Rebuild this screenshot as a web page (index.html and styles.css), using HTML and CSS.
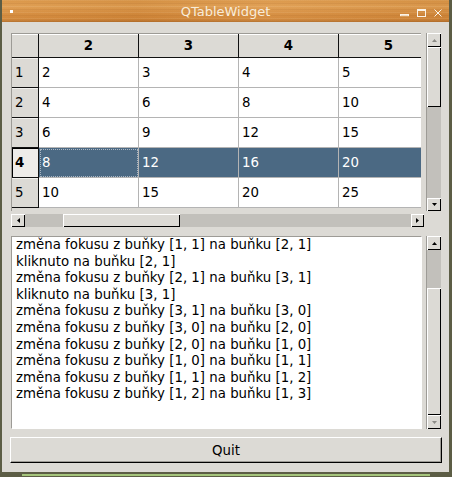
FILE: index.html
```html
<!DOCTYPE html>
<html>
<head>
<meta charset="utf-8">
<link rel="stylesheet" href="styles.css">
</head>
<body>
<div class="window">
  <div class="titlebar">
    <div class="tb-left"><span class="menu-dot"></span></div>
    <div class="title">QTableWidget</div>
    <div class="tb-right">
      <svg class="controls" width="44" height="22" viewBox="0 0 44 22">
        <g fill="none" stroke="#fbf3e6" stroke-width="1">
          <rect x="0.5" y="13.5" width="8" height="1.2"/>
          <rect x="17.5" y="8.5" width="8" height="7"/>
          <line x1="17.5" y1="9.5" x2="25.5" y2="9.5"/>
          <line x1="34.5" y1="8.5" x2="41.5" y2="15.5"/>
          <line x1="41.5" y1="8.5" x2="34.5" y2="15.5"/>
        </g>
      </svg>
    </div>
  </div>

  <div class="client">
    <div class="table-widget">
      <div class="viewport">
        <div class="row header-row">
          <div class="rh corner"></div>
          <div class="ch">2</div><div class="ch">3</div><div class="ch">4</div><div class="ch">5</div>
        </div>
        <div class="row">
          <div class="rh">1</div>
          <div class="cell">2</div><div class="cell">3</div><div class="cell">4</div><div class="cell">5</div>
        </div>
        <div class="row">
          <div class="rh">2</div>
          <div class="cell">4</div><div class="cell">6</div><div class="cell">8</div><div class="cell">10</div>
        </div>
        <div class="row">
          <div class="rh">3</div>
          <div class="cell">6</div><div class="cell">9</div><div class="cell">12</div><div class="cell">15</div>
        </div>
        <div class="row selected">
          <div class="rh rh-active">4</div>
          <div class="cell focus">8</div><div class="cell">12</div><div class="cell">16</div><div class="cell">20</div>
        </div>
        <div class="row">
          <div class="rh">5</div>
          <div class="cell">10</div><div class="cell">15</div><div class="cell">20</div><div class="cell">25</div>
        </div>
      </div>

      <div class="vscroll table-vs">
        <div class="sbtn vbtn"><svg width="5" height="3"><polygon points="0,3 5,3 2.5,0" fill="#8c8b87"/></svg></div>
        <div class="slider tv-slider"></div>
        <div class="trough"></div>
        <div class="sbtn vbtn-down"><svg width="5" height="3"><polygon points="0,0 5,0 2.5,3" fill="#000"/></svg></div>
      </div>

      <div class="hscroll">
        <div class="sbtn hbtn"><svg width="3" height="5"><polygon points="3,0 3,5 0,2.5" fill="#000"/></svg></div>
        <div class="trough h-trough-a"></div>
        <div class="slider h-slider"></div>
        <div class="trough"></div>
        <div class="sbtn hbtn-r"><svg width="3" height="5"><polygon points="0,0 0,5 3,2.5" fill="#000"/></svg></div>
      </div>
    </div>

    <div class="log-widget">
      <div class="log">
        <div>změna fokusu z buňky [1, 1] na buňku [2, 1]</div>
        <div>kliknuto na buňku [2, 1]</div>
        <div>změna fokusu z buňky [2, 1] na buňku [3, 1]</div>
        <div>kliknuto na buňku [3, 1]</div>
        <div>změna fokusu z buňky [3, 1] na buňku [3, 0]</div>
        <div>změna fokusu z buňky [3, 0] na buňku [2, 0]</div>
        <div>změna fokusu z buňky [2, 0] na buňku [1, 0]</div>
        <div>změna fokusu z buňky [1, 0] na buňku [1, 1]</div>
        <div>změna fokusu z buňky [1, 1] na buňku [1, 2]</div>
        <div>změna fokusu z buňky [1, 2] na buňku [1, 3]</div>
      </div>
      <div class="vscroll log-vs">
        <div class="sbtn vbtn"><svg width="5" height="3"><polygon points="0,3 5,3 2.5,0" fill="#000"/></svg></div>
        <div class="trough log-trough"></div>
        <div class="slider log-slider"></div>
        <div class="sbtn vbtn-down log-down"><svg width="5" height="3"><polygon points="0,0 5,0 2.5,3" fill="#8c8b87"/></svg></div>
      </div>
    </div>

    <div class="quit">Quit</div>
  </div>

  <div class="bottom-frame"><div class="green"></div></div>
</div>
</body>
</html>
```
FILE: styles.css
```css
* { box-sizing: border-box; }
html, body { margin: 0; padding: 0; }
body {
  width: 452px;
  height: 477px;
  overflow: hidden;
  background: #5c5d45;
  font-family: "DejaVu Sans", "Liberation Sans", sans-serif;
  font-size: 13.33px;
  color: #000;
}
.window {
  width: 452px;
  height: 477px;
  display: flex;
  flex-direction: column;
  background: #dcdad5;
  border-left: 2px solid #5c5d45;
  border-right: 3px solid #5c5d45;
}

/* title bar */
.titlebar {
  height: 22px;
  flex: none;
  display: grid;
  grid-template-columns: 1fr auto 1fr;
  align-items: center;
  background:
    repeating-linear-gradient(180deg, rgba(255,235,200,0.10) 0 1px, rgba(0,0,0,0) 1px 3px, rgba(120,60,10,0.08) 3px 4px, rgba(0,0,0,0) 4px 6px),
    linear-gradient(90deg, rgba(255,220,170,0.06), rgba(120,60,10,0.05) 30%, rgba(255,220,170,0.08) 60%, rgba(120,60,10,0.06)),
    linear-gradient(180deg, #d99445 0%, #de9c50 30%, #d58c3e 60%, #d08537 85%, #b97430 100%);
}
.tb-left { display: flex; padding-left: 8px; }
.menu-dot { width: 3px; height: 3px; background: #fff; margin-top: -1px; }
.title {
  color: #f8ecd9;
  font-size: 13px;
  line-height: 22px;
  padding-top: 1px;
}
.tb-right { display: flex; justify-content: flex-end; padding-right: 5px; }
.controls { display: block; }

/* client */
.client {
  flex: 1;
  display: flex;
  flex-direction: column;
  padding: 11px 8px 0 9px;
}

.table-widget {
  display: grid;
  grid-template-columns: 413px 15px;
  grid-template-rows: 178px 17px;
  column-gap: 2px;
}
.viewport {
  grid-row: 1;
  grid-column: 1;
  width: 410px;
  overflow: hidden;
  border-top: 1px solid #9d9b96;
  border-left: 1px solid #9d9b96;
  background: #dcdad5;
}
.row { display: flex; height: 30px; background: #fff; }
.header-row { height: 24px; background: #dcdad5; }
.rh {
  flex: none;
  width: 27px;
  padding-left: 3px;
  display: flex;
  align-items: center;
  background: #dcdad5;
  border-right: 1px solid #111;
  border-bottom: 1px solid #111;
  box-shadow: inset 0 1px 0 #f2f1ee;
}
.corner { box-shadow: inset 0 1px 0 #fff; }
.ch {
  flex: none;
  width: 100px;
  font-weight: bold;
  display: flex;
  align-items: center;
  justify-content: center;
  border-right: 1px solid #111;
  border-bottom: 1px solid #111;
  box-shadow: inset 0 1px 0 #fff;
}
.cell {
  flex: none;
  width: 100px;
  padding-left: 3px;
  display: flex;
  align-items: center;
  border-right: 1px solid #b4b4b4;
  border-bottom: 1px solid #b4b4b4;
}
.selected .cell { background: #4b6983; color: #fff; }
.rh-active {
  background: #eeece9;
  font-weight: bold;
  box-shadow: inset 1px 1px 0 #000;
}
.focus { outline: 1px dotted #a9b6c3; outline-offset: -2px; }

/* scrollbars */
.vscroll {
  display: flex;
  flex-direction: column;
  border-left: 1px solid #9d9b96;
  background: #c2c0bb;
}
.table-vs { grid-row: 1; grid-column: 2; }
.sbtn, .slider {
  background: #dcdad5;
  box-shadow: inset 1px 1px 0 #fff, inset -1px -1px 0 #000;
  display: flex;
  align-items: center;
  justify-content: center;
  flex: none;
}
.sbtn svg { display: block; }
.vbtn { height: 14px; }
.vbtn-down { height: 13px; }
.tv-slider { height: 60px; }
.trough { flex: 1; background: #c2c0bb; }

.hscroll {
  grid-row: 2;
  grid-column: 1;
  margin-top: 3px;
  height: 13px;
  display: flex;
  background: #c2c0bb;
}
.hbtn { width: 14px; }
.hbtn-r { width: 13px; }
.h-trough-a { flex: none; width: 38px; }
.h-slider { width: 117px; }

/* log */
.log-widget {
  margin-top: 8px;
  height: 193px;
  display: flex;
}
.log {
  width: 411px;
  flex: none;
  background: #fff;
  border-top: 1px solid #9d9b96;
  border-left: 1px solid #9d9b96;
  border-right: 1px solid #fff;
  border-bottom: 1px solid #fff;
  padding: 0 0 0 4px;
  line-height: 16.6px;
  white-space: nowrap;
  overflow: hidden;
}
.log-vs { margin-left: 4px; width: 15px; flex: none; }
.log-trough { flex: none; height: 38px; }
.log-slider { flex: 1; }
.log-down { height: 14px; }

/* button */
.quit {
  margin: 8px -1px 0 -1px;
  height: 26px;
  display: flex;
  align-items: center;
  justify-content: center;
  background: #dcdad5;
  border-top: 1px solid #fff;
  border-left: 1px solid #fff;
  border-right: 1px solid #000;
  border-bottom: 1px solid #000;
  box-shadow: inset -1px -1px 0 #9d9b96;
}

/* bottom frame */
.bottom-frame {
  height: 5px;
  flex: none;
  background: #5c5d45;
  padding-top: 2px;
}
.green { margin-left: 20px; width: 408px; height: 2px; background: #a5c57c; }
```
